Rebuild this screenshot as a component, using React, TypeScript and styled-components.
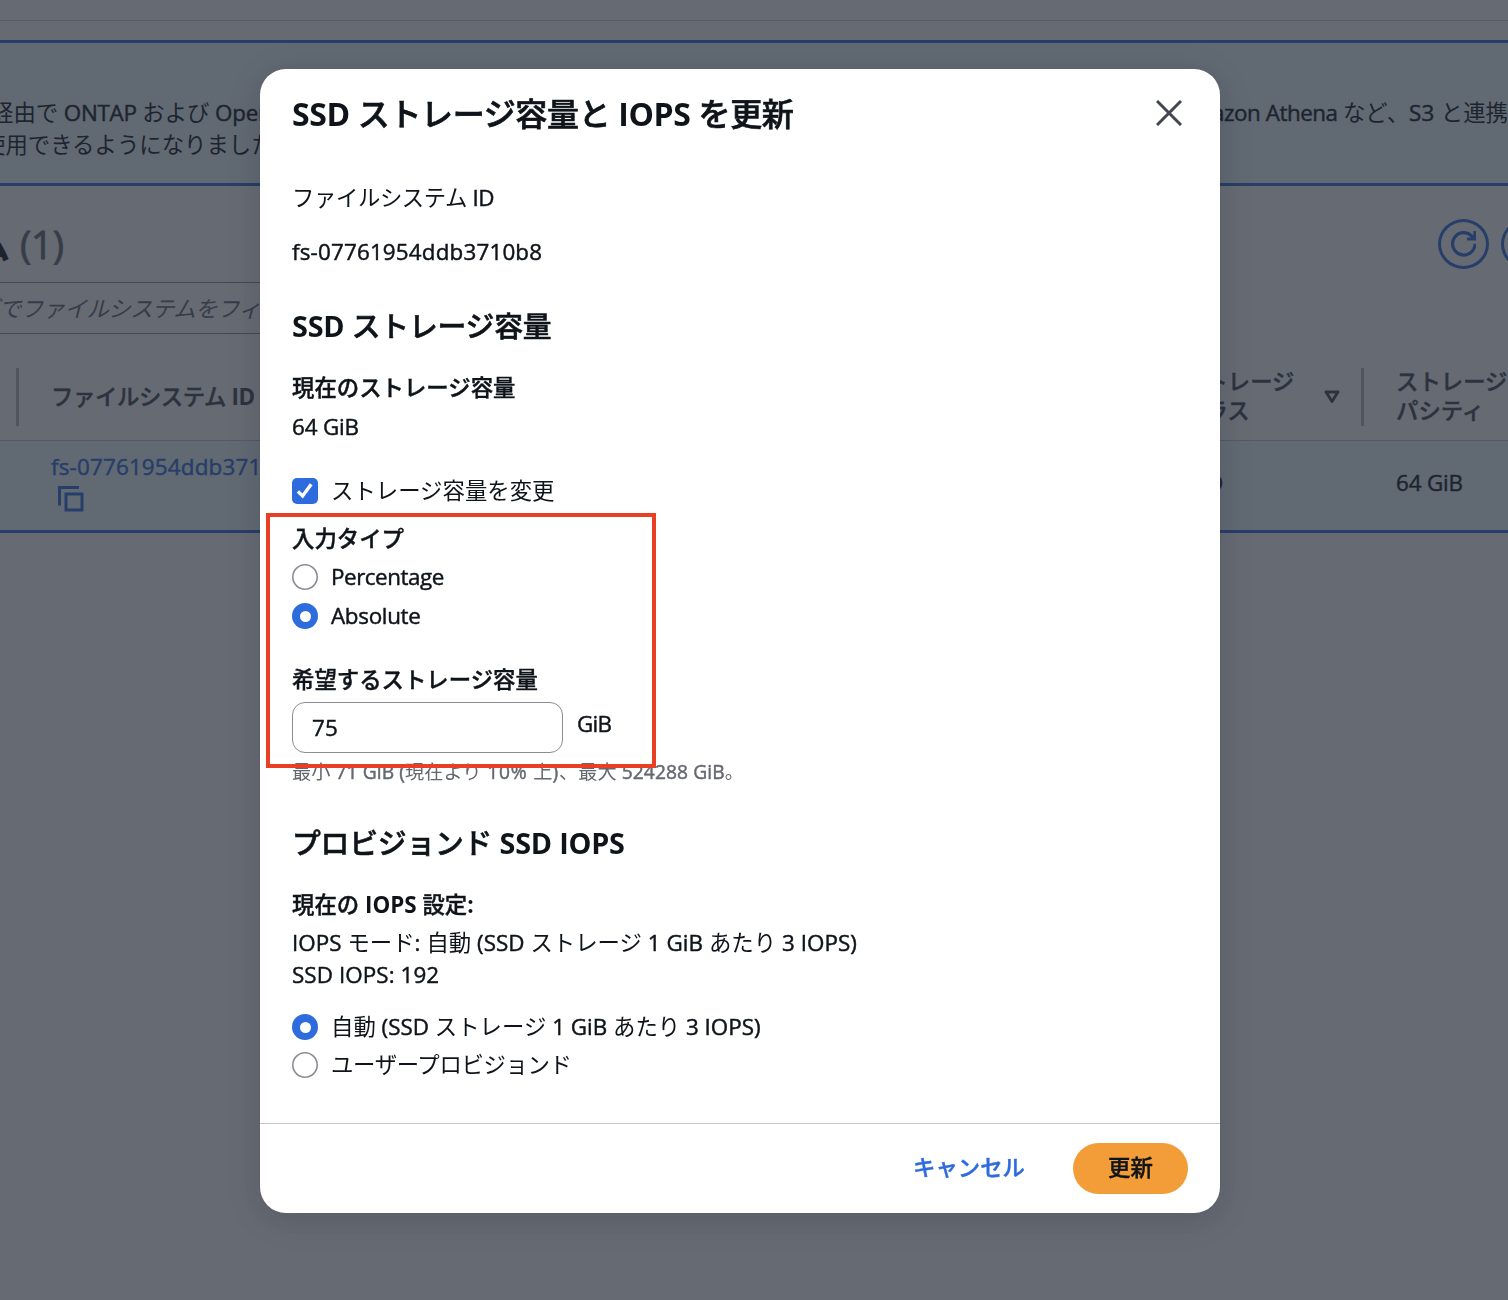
import React from "react";
import styled, { createGlobalStyle, css } from "styled-components";

const blue = "#2e6bdc";
const ink = "#0f141a";

/* Semi-bold japanese next to fully bold latin. */
const strong = css`
  --latin-stroke: 0px;
  --latin-weight: 700;
  font-weight: 500;
  -webkit-text-stroke: 0.4px currentColor;
`;

const GlobalStyle = createGlobalStyle`
  *, *::before, *::after { box-sizing: border-box; }
  html, body { margin: 0; height: 1300px; overflow: hidden; background: #fff; }
  body {
    --latin-stroke: 0.45px;
    --latin-weight: 400;
    font-family: "Open Sans", "Noto Sans CJK JP", sans-serif;
    font-size: 22.4px;
    line-height: 32px;
    color: ${ink};
  }
`;

const Latin = styled.span<{ $ls?: number }>`
  ${(p) => (p.$ls === undefined ? "" : `letter-spacing: ${p.$ls}px;`)}
  font-weight: var(--latin-weight);
  -webkit-text-stroke: var(--latin-stroke) currentColor;
`;

/* Tracks latin and japanese runs separately; an array gives each latin run its own tracking. */
function Mixed({ children, ls }: { children: string; ls?: number | number[] }) {
  const runs = children.split(/([\x20-\x7e]+)/).filter(Boolean);
  let n = 0;
  return (
    <>
      {runs.map((r, i) => {
        if (!/^[\x20-\x7e]/.test(r)) return <React.Fragment key={i}>{r}</React.Fragment>;
        const track = Array.isArray(ls) ? ls[n++] : ls;
        return <Latin key={i} $ls={track}>{r}</Latin>;
      })}
    </>
  );
}

const Page = styled.div`
  width: 1508px;
  height: 1300px;
  overflow: hidden;
  display: flex;
  flex-direction: column;
`;
const TopStrip = styled.div`
  height: 21px;
  flex: none;
  border-bottom: 1px solid #c6c6cd;
  margin-bottom: 19px;
`;
const Flash = styled.div`
  flex: none;
  height: 146px;
  border-top: 3px solid ${blue};
  border-bottom: 3px solid ${blue};
  background: #f0fbff;
  padding-top: 54px;
`;
const FlashLine = styled.div<{ $shift?: number }>`
  display: flex;
  justify-content: space-between;
  height: 32px;
  white-space: pre;
  margin-left: ${(p) => p.$shift ?? 0}px;
`;
const FlashEnd = styled.span`
  width: 330px;
  flex: none;
`;
const TitleRow = styled.div`
  flex: none;
  height: 96px;
  display: flex;
  align-items: center;
  padding-top: 20px;
`;
const TableTitle = styled.h2`
  margin: 0 auto 0 -28px;
  font-size: 38.4px;
  line-height: 50px;
  height: 50px;
  font-weight: 700;
  white-space: pre;
`;
const Count = styled.span`
  font-weight: 400;
  color: #656871;
  letter-spacing: -0.3px;
  -webkit-text-stroke: 0.8px currentColor;
`;
const RoundButton = styled.div`
  width: 51px;
  height: 50px;
  flex: none;
  border: 3px solid ${blue};
  border-radius: 50%;
  margin-right: 12px;
  color: ${blue};
  display: flex;
  align-items: center;
  justify-content: center;
  & + & { margin-right: -44px; }
`;
const Filter = styled.div`
  flex: none;
  width: 900px;
  height: 52px;
  border: 1px solid #8c8c94;
  border-left: 0;
  border-radius: 0 13px 13px 0;
  color: #656871;
  font-style: italic;
  letter-spacing: -0.5px;
  line-height: 51px;
  white-space: pre;
  text-indent: -23px;
`;
const HeadRow = styled.div`
  ${strong}
  flex: none;
  display: flex;
  align-items: center;
  height: 107px;
  padding: 20px 0 0 16px;
  border-bottom: 1px solid #c6c6cd;
  color: #424650;
`;
const Divider = styled.i`
  width: 3px;
  height: 58px;
  flex: none;
  background: #b4b4bb;
`;
const HeadCell = styled.div<{ $w: number; $ml: number; $track?: number }>`
  width: ${(p) => p.$w}px;
  margin-left: ${(p) => p.$ml}px;
  margin-top: -2px;
  letter-spacing: ${(p) => p.$track ?? 0}px;
  flex: none;
  line-height: 29px;
  white-space: pre;
`;
const SortIcon = styled.svg`
  width: 16px;
  height: 14px;
  flex: none;
  margin-right: 21px;
`;
const Row = styled.div`
  flex: none;
  height: 92px;
  background: #f0fbff;
  border-bottom: 3px solid ${blue};
  display: flex;
  align-items: center;
  padding: 0 0 5px 51px;
`;
const IdCell = styled.div`
  width: 1133px;
  flex: none;
  padding-bottom: 4px;
  color: ${blue};
  display: flex;
  flex-direction: column;
  svg { margin: 3px 0 0 7px; }
`;
const Cell = styled.div<{ $w: number }>`
  width: ${(p) => p.$w}px;
  flex: none;
  white-space: nowrap;
`;

const Overlay = styled.div`
  position: fixed;
  inset: 0;
  background: rgba(35, 43, 55, 0.7);
  display: flex;
  justify-content: center;
  align-items: flex-start;
  padding: 69px 28px 0 0;
`;
const Dialog = styled.div`
  width: 960px;
  height: 1144px;
  background: #fff;
  border-radius: 26px;
  box-shadow: 0 6px 32px 2px rgba(0, 7, 22, 0.14);
  display: flex;
  flex-direction: column;
`;
const Header = styled.div`
  height: 91px;
  padding: 0 38px 2px 32px;
  display: flex;
  align-items: center;
  justify-content: space-between;
  svg { margin-bottom: 2px; }
`;
const Title = styled.h1`
  ${strong}
  -webkit-text-stroke-width: 0.7px;
  margin: 0;
  height: 40px;
  font-size: 32px;
  line-height: 40px;
  letter-spacing: -0.36px;
  white-space: nowrap;
`;
const Body = styled.div`
  flex: 1;
  padding: 22px 32px 0;
  position: relative;
`;
const Line = styled.div<{ $gap?: number; $bold?: boolean; $track?: number }>`
  height: 32px;
  margin-top: ${(p) => p.$gap ?? 0}px;
  ${(p) => p.$bold && strong}
  letter-spacing: ${(p) => p.$track ?? 0}px;
  white-space: nowrap;
`;
const Heading = styled.h2<{ $gap: number }>`
  ${strong}
  -webkit-text-stroke-width: 0.6px;
  margin: ${(p) => p.$gap}px 0 0;
  height: 36px;
  font-size: 28.8px;
  line-height: 36px;
  letter-spacing: -0.2px;
  white-space: nowrap;
`;
const Choice = styled.label<{ $gap: number; $track?: number }>`
  display: flex;
  align-items: center;
  gap: 13px;
  height: 32px;
  margin-top: ${(p) => p.$gap}px;
  letter-spacing: ${(p) => p.$track ?? 0}px;
  white-space: nowrap;
`;
const ChoiceText = styled.span`
  height: 32px;
`;
const Check = styled.span`
  width: 26px;
  height: 26px;
  border-radius: 5px;
  background: ${blue};
  svg { display: block; }
`;
const Radio = styled.span<{ $on?: boolean }>`
  width: 26px;
  height: 26px;
  border-radius: 50%;
  background: ${(p) => (p.$on ? blue : "#fff")};
  box-shadow: ${(p) => (p.$on ? "none" : "inset 0 0 0 1.6px #8c8c94")};
  display: flex;
  &::after {
    content: "";
    width: 11px;
    height: 11px;
    margin: auto;
    border-radius: 50%;
    background: #fff;
  }
`;
const InputRow = styled.div`
  display: flex;
  gap: 14px;
  margin-top: 6px;
`;
const Input = styled.div`
  width: 271px;
  height: 51px;
  border: 1px solid #8c8c94;
  border-radius: 13px;
  padding-left: 19px;
  line-height: 49px;
`;
const Unit = styled.span`
  line-height: 44px;
`;
const Hint = styled.div`
  height: 24px;
  margin-top: 7px;
  font-size: 19.2px;
  line-height: 24px;
  color: #656871;
  white-space: nowrap;
`;
const Highlight = styled.div`
  position: absolute;
  left: 6px;
  top: 353px;
  width: 390px;
  height: 255px;
  border: 4px solid #e94025;
`;
const Footer = styled.div`
  ${strong}
  height: 90px;
  border-top: 1px solid #c6c6cd;
  padding: 0 32px;
  display: flex;
  align-items: center;
  justify-content: flex-end;
  gap: 48px;
`;
const Cancel = styled.span`
  color: ${blue};
  height: 34px;
`;
const Submit = styled.span`
  width: 115px;
  height: 51px;
  border-radius: 26px;
  background: #f29d38;
  text-align: center;
  line-height: 49px;
`;

const RadioRow = ({ on, gap, ls, track, children }: { on?: boolean; gap: number; ls?: number; track?: number; children: string }) => (
  <Choice $gap={gap} $track={track}>
    <Radio $on={on} />
    <ChoiceText><Mixed ls={ls}>{children}</Mixed></ChoiceText>
  </Choice>
);

export default function App() {
  return (
    <>
      <GlobalStyle />
      <Page>
        <TopStrip />
        <Flash>
          <FlashLine $shift={-9}>
            <span><Mixed ls={-0.25}>経由で ONTAP および OpenZFS</Mixed></span>
            <FlashEnd><Mixed ls={[-0.45, 0.3]}>Amazon Athena など、S3 と連携する</Mixed></FlashEnd>
          </FlashLine>
          <FlashLine $shift={-17}>使用できるようになりました。</FlashLine>
        </Flash>
        <TitleRow>
          <TableTitle>ム<Count> (1)</Count></TableTitle>
          <RoundButton>
            <svg width="25.6" height="25.6" viewBox="0 0 16 16" fill="none" stroke="currentColor" strokeWidth="2">
              <path d="M15 8a7 7 0 1 1-2.1-5L15 5M15 0v5h-5" />
            </svg>
          </RoundButton>
          <RoundButton />
        </TitleRow>
        <Filter>グでファイルシステムをフィルタリング</Filter>
        <HeadRow>
          <Divider />
          <HeadCell $w={1132} $ml={32} $track={-0.42}><Mixed>ファイルシステム ID</Mixed></HeadCell>
          <HeadCell $w={141} $ml={0}>{"ストレージ\nクラス"}</HeadCell>
          <SortIcon viewBox="0 0 16 14" fill="none" stroke="#424650" strokeWidth="2.9" strokeLinejoin="round">
            <path d="M2 2h12L8 11.5z" />
          </SortIcon>
          <Divider />
          <HeadCell $w={180} $ml={32}>{"ストレージキャ\nパシティ"}</HeadCell>
        </HeadRow>
        <Row>
          <IdCell>
            <Mixed ls={0.18}>fs-07761954ddb3710b8</Mixed>
            <svg width="26" height="26" viewBox="0 0 26 26" fill="none" stroke="currentColor" strokeWidth="3">
              <path d="M1.5 19.5V1.5H21M8 8h16v16H8z" />
            </svg>
          </IdCell>
          <Cell $w={212}><Mixed ls={-0.8}>SSD</Mixed></Cell>
          <Cell $w={112}><Mixed ls={-0.15}>64 GiB</Mixed></Cell>
        </Row>
      </Page>

      <Overlay>
        <Dialog>
          <Header>
            <Title><Mixed>SSD ストレージ容量と IOPS を更新</Mixed></Title>
            <svg width="26" height="26" viewBox="0 0 26 26" fill="none" stroke="#424650" strokeWidth="3">
              <path d="M1 1l24 24M25 1L1 25" />
            </svg>
          </Header>
          <Body>
            <Line $track={-0.42}><Mixed>ファイルシステム ID</Mixed></Line>
            <Line $gap={22}><Mixed ls={0.18}>fs-07761954ddb3710b8</Mixed></Line>
            <Heading $gap={40}><Mixed>SSD ストレージ容量</Mixed></Heading>
            <Line $gap={28} $bold>現在のストレージ容量</Line>
            <Line $gap={7}><Mixed ls={-0.15}>64 GiB</Mixed></Line>
            <Choice $gap={32}>
              <Check>
                <svg width="26" height="26" viewBox="0 0 26 26" fill="none" stroke="#fff" strokeWidth="3.4">
                  <path d="M5.9 13.4l4.7 4.6L19.2 6.2" />
                </svg>
              </Check>
              <ChoiceText>ストレージ容量を変更</ChoiceText>
            </Choice>
            <Line $gap={16} $bold>入力タイプ</Line>
            <RadioRow gap={6} ls={-0.45}>Percentage</RadioRow>
            <RadioRow gap={7} ls={-0.3} on>Absolute</RadioRow>
            <Line $gap={32} $bold>希望するストレージ容量</Line>
            <InputRow>
              <Input><Mixed ls={0.2}>75</Mixed></Input>
              <Unit><Mixed ls={-0.7}>GiB</Mixed></Unit>
            </InputRow>
            <Hint><Mixed ls={[0.1, 0.8, 1, 0.1]}>最小 71 GiB (現在より 10% 上)、最大 524288 GiB。</Mixed></Hint>
            <Heading $gap={41}><Mixed>プロビジョンド SSD IOPS</Mixed></Heading>
            <Line $gap={28} $bold><Mixed>現在の IOPS 設定:</Mixed></Line>
            <Line $gap={6}><Mixed ls={0.04}>IOPS モード: 自動 (SSD ストレージ 1 GiB あたり 3 IOPS)</Mixed></Line>
            <Line><Mixed ls={0.08}>SSD IOPS: 192</Mixed></Line>
            <RadioRow gap={20} on>自動 (SSD ストレージ 1 GiB あたり 3 IOPS)</RadioRow>
            <RadioRow gap={6} track={-0.35}>ユーザープロビジョンド</RadioRow>
            <Highlight />
          </Body>
          <Footer>
            <Cancel>キャンセル</Cancel>
            <Submit>更新</Submit>
          </Footer>
        </Dialog>
      </Overlay>
    </>
  );
}
